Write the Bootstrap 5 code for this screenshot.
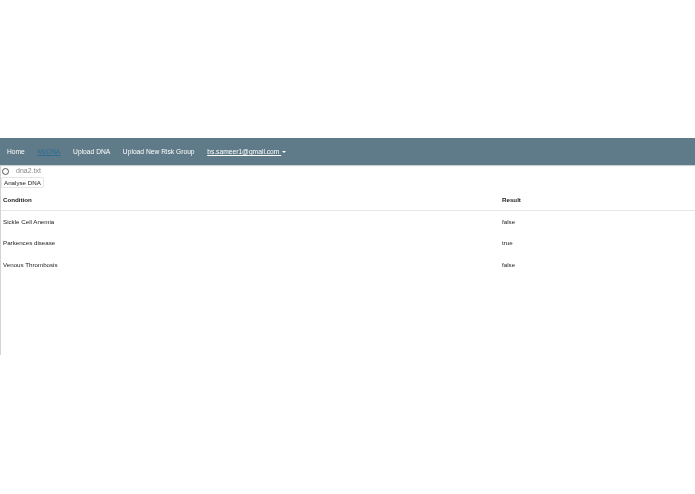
<!doctype html>
<html lang="en">
<head>
<meta charset="utf-8">
<title>MyDNA</title>
<link href="https://cdn.jsdelivr.net/npm/bootstrap@5.3.0/dist/css/bootstrap.min.css" rel="stylesheet">
<style>
html,body{background:#fff;}
body{font-family:"Liberation Sans",Arial,sans-serif;font-size:6.2px;line-height:1.2;color:#222;min-height:494px;overflow:hidden;}
.page-wrap{filter:blur(.25px);}
.page-gap{height:138px;}
.top-bar{background:#5f7b89;height:27px;padding:0 0 0 7px;box-shadow:0 1px 1px rgba(0,0,0,.18);gap:12.6px;flex-wrap:nowrap;}
.top-bar .nav-link{color:#fff;font-size:6.7px;padding:0;line-height:27px;white-space:nowrap;}
.top-bar .nav-link.current{color:#2f6d92;text-decoration:underline;}
.top-bar .nav-link.account{text-decoration:underline;}
.caret-mark{display:inline-block;border-top:2.5px solid #fff;border-left:2.5px solid transparent;border-right:2.5px solid transparent;vertical-align:middle;margin-left:1px;}
.content-area{border-left:1px solid #d4d4d4;height:190px;}
.file-row{height:12px;gap:7px;padding-left:1px;color:#888;font-size:7px;}
.file-radio{width:7px;height:7px;border:1px solid #555;border-radius:50%;background:#fff;flex:none;}
.analyse-btn{font-size:6.2px;line-height:8px;padding:0 2px;margin:0;background:#fff;color:#222;border:1px solid #e6e6e6;border-radius:1px;display:block;height:11px;}
.result-table{width:100%;margin:1px 0 0 0;font-size:6.2px;color:#222;}
.result-table th,.result-table td{padding:0 2px;height:22px;vertical-align:middle;border:0;color:#222;background:transparent;box-shadow:none;}
.result-table thead th{height:21px;font-weight:700;border-bottom:1px solid #e6e6e6;}
.result-table .col-first{width:499px;}
</style>
</head>
<body>
<div class="page-wrap">
<div class="page-gap"></div>
<nav class="top-bar nav align-items-center">
  <a class="nav-link" href="#">Home</a>
  <a class="nav-link current" href="#">MyDNA</a>
  <a class="nav-link" href="#">Upload DNA</a>
  <a class="nav-link" href="#">Upload New Risk Group</a>
  <a class="nav-link account" href="#">bs.sameer1@gmail.com <span class="caret-mark"></span></a>
</nav>
<main class="content-area">
  <div class="file-row d-flex align-items-center"><span class="file-radio"></span><span>dna2.txt</span></div>
  <button type="button" class="analyse-btn">Analyse DNA</button>
  <table class="table result-table">
    <thead><tr><th class="col-first">Condition</th><th>Result</th></tr></thead>
    <tbody>
      <tr><td>Sickle Cell Anemia</td><td>false</td></tr>
      <tr><td>Parkences disease</td><td>true</td></tr>
      <tr><td>Venous Thrombosis</td><td>false</td></tr>
    </tbody>
  </table>
</main>
</div>
<script src="https://cdn.jsdelivr.net/npm/bootstrap@5.3.0/dist/js/bootstrap.bundle.min.js"></script>
</body>
</html>
